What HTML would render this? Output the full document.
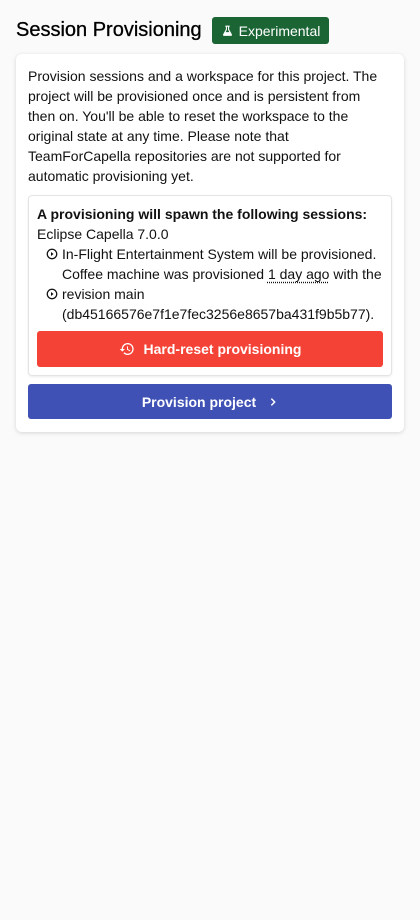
<!DOCTYPE html>
<html><head><style>
body{margin:0;background:#fafafa;font-family:"Liberation Sans",Roboto,sans-serif;color:#000;width:420px;height:920px;overflow:hidden}
.title{position:absolute;left:16px;top:17px;height:27px;display:flex;align-items:center;font-size:20px;font-weight:500;-webkit-text-stroke:0.3px #000}
.badge{position:absolute;left:212px;top:17px;width:117px;height:27px;background:#1b6535;border-radius:3px;color:#fff;font-size:14px;display:flex;align-items:center;justify-content:center;gap:5px}
.card{position:absolute;left:16px;top:54px;width:388px;height:378px;background:#fff;border-radius:6px;box-shadow:0 1px 4px rgba(0,0,0,.15)}
.p{position:absolute;left:12px;top:12px;width:352px;font-size:14px;line-height:20px;color:#111}
.box{position:absolute;left:12px;top:141px;width:362px;height:179px;border:1px solid #e4e4e4;border-radius:4px;box-shadow:0 1px 2px rgba(0,0,0,.08)}
.in{position:absolute;left:8px;top:8px;width:350px;font-size:14px;line-height:20px;color:#111}
.li{display:flex;align-items:center;margin-left:9px}
.li svg{flex:none;margin-right:4px}
.red{position:absolute;left:8px;top:135px;width:346px;height:36px;background:#f44336;border-radius:3px;color:#fff;font-weight:bold;font-size:14px;display:flex;align-items:center;justify-content:center;gap:9px}
.blue{position:absolute;left:12px;top:330px;width:364px;height:35px;background:#3f51b5;border-radius:3px;color:#fff;font-weight:bold;font-size:14px;display:flex;align-items:center;justify-content:center;gap:12px}
u{text-decoration:underline dotted;text-underline-offset:3px}
</style></head><body>
<div class="title">Session Provisioning</div>
<div class="badge"><svg width="13" height="13" viewBox="0 0 24 24"><path d="M8 3h8v2h-1v5l5 9a2 2 0 0 1-2 3H6a2 2 0 0 1-2-3l5-9V5H8z M11 5v5.5L8.5 15h7L13 10.5V5z" fill="#fff"/></svg>Experimental</div>
<div class="card">
<div class="p">Provision sessions and a workspace for this project. The project will be provisioned once and is persistent from then on. You'll be able to reset the workspace to the original state at any time. Please note that TeamForCapella repositories are not supported for automatic provisioning yet.</div>
<div class="box"><div class="in">
<b>A provisioning will spawn the following sessions:</b><br>Eclipse Capella 7.0.0
<div class="li"><svg width="12" height="12" viewBox="0 0 24 24"><circle cx="12" cy="12" r="9.5" fill="none" stroke="#111" stroke-width="2.5"/><path d="M10 8l5 4-5 4z" fill="#111"/></svg><span>In-Flight Entertainment System will be provisioned.</span></div>
<div class="li"><svg width="12" height="12" viewBox="0 0 24 24"><circle cx="12" cy="12" r="9.5" fill="none" stroke="#111" stroke-width="2.5"/><path d="M10 8l5 4-5 4z" fill="#111"/></svg><span>Coffee machine was provisioned <u>1 day ago</u> with the revision main (db45166576e7f1e7fec3256e8657ba431f9b5b77).</span></div>
</div>
<div class="red"><svg width="16" height="16" viewBox="0 0 24 24"><path d="M13 3a9 9 0 0 0-9 9H1l4 4 4-4H6a7 7 0 1 1 2.05 4.95l-1.42 1.42A9 9 0 1 0 13 3zm-1 5v5l4.25 2.52.77-1.28-3.52-2.09V8z" fill="#fff"/></svg>Hard-reset provisioning</div>
</div>
<div class="blue">Provision project <svg width="10" height="10" viewBox="0 0 24 24"><path d="M8 4l8 8-8 8" fill="none" stroke="#fff" stroke-width="3.5"/></svg></div>
</div>
</body></html>
